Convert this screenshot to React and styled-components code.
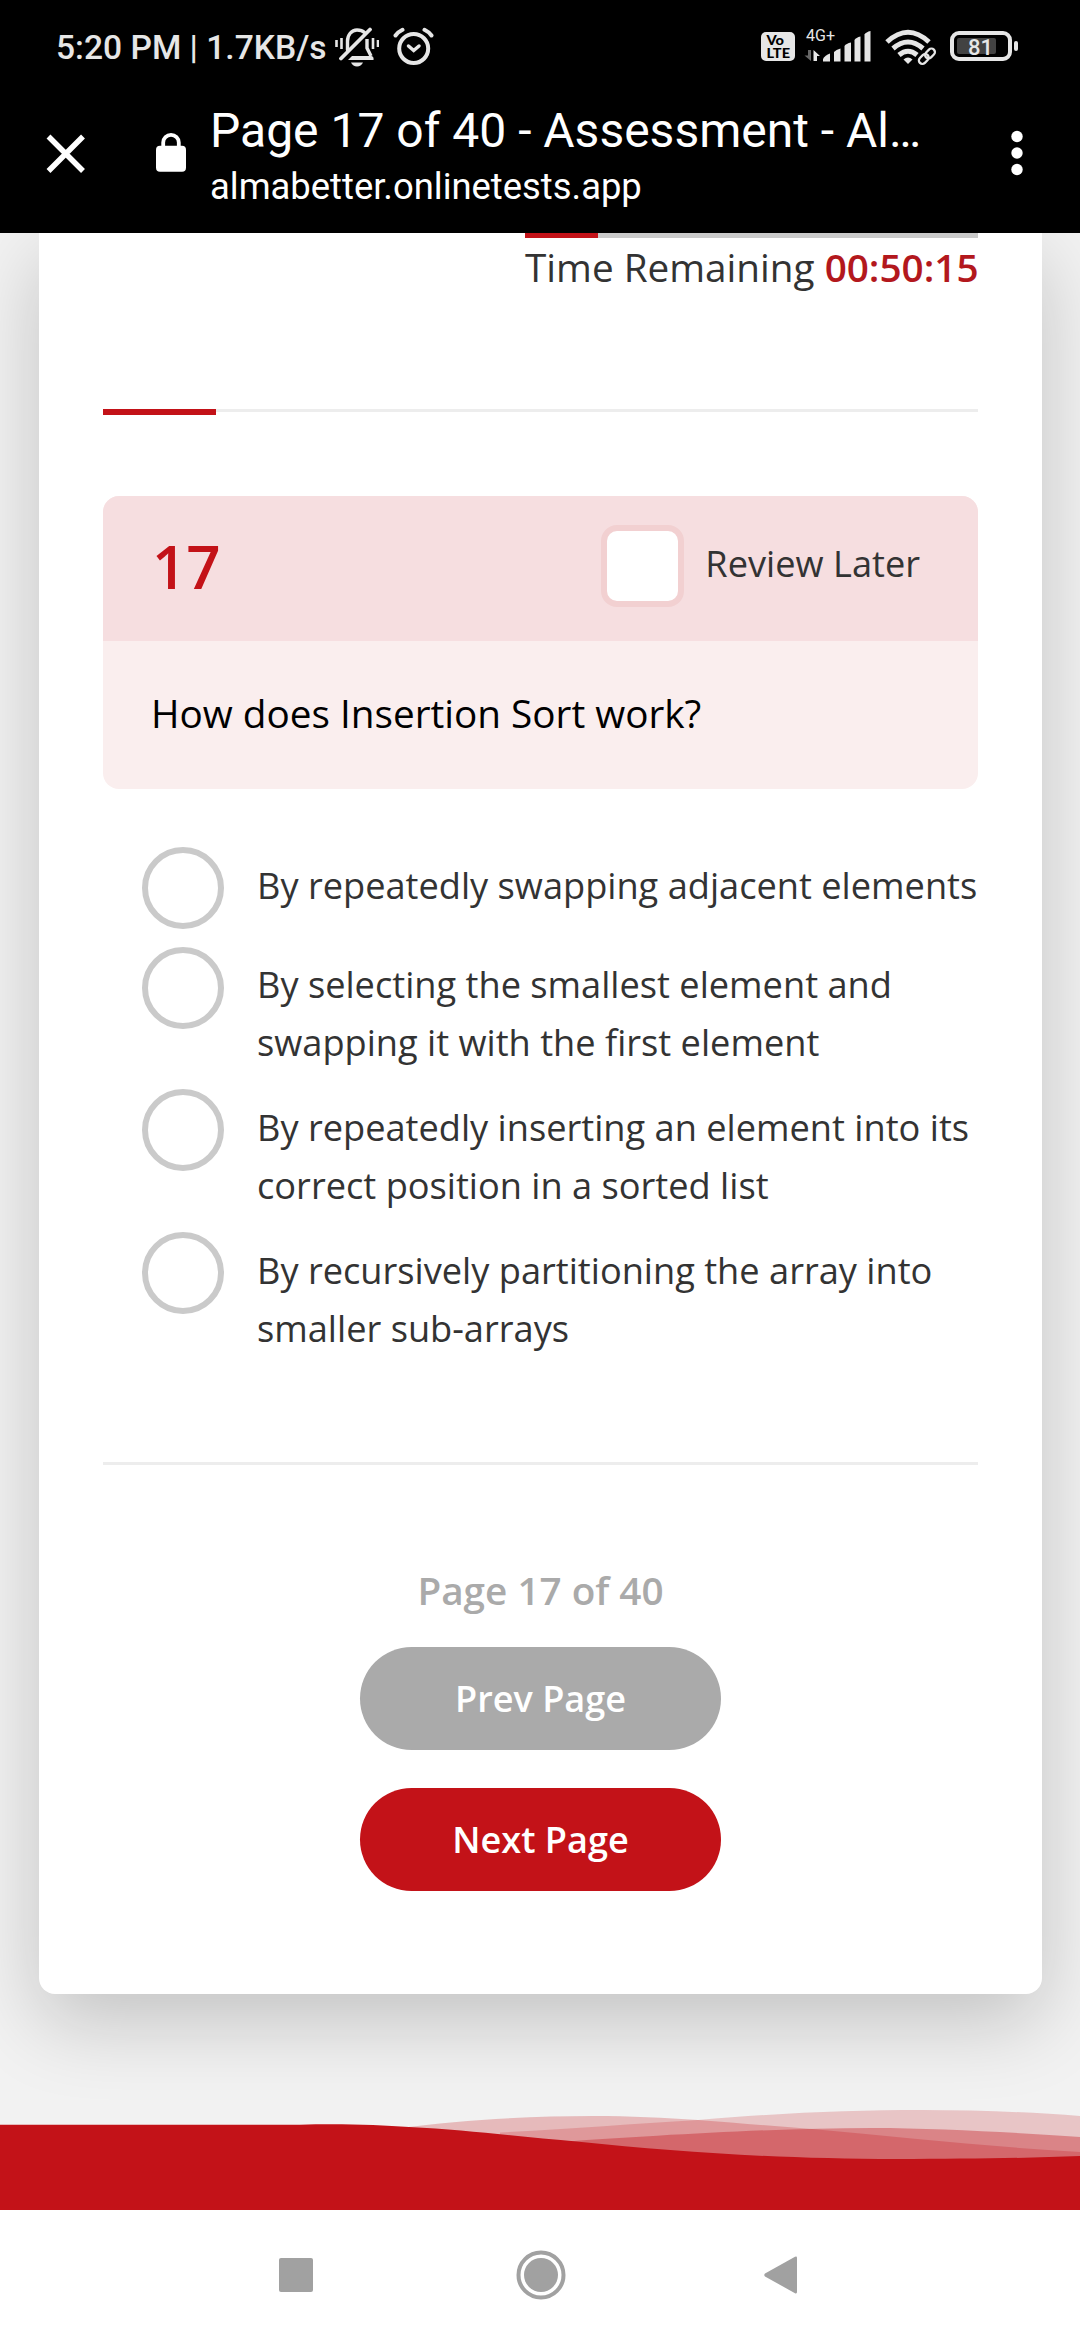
import React from 'react';
import styled, { createGlobalStyle } from 'styled-components';

const Global = createGlobalStyle`
  *, *::before, *::after { box-sizing: border-box; }
  body { margin: 0; background: #f2f2f2; }
  svg { display: block; flex: none; }
`;
const RED = '#c31218';

const Screen = styled.div`
  width: 1080px;
  height: 2340px;
  display: flex;
  flex-direction: column;
  overflow: hidden;
  background: #f2f2f2;
  font-family: 'Open Sans', sans-serif;
  color: #333;
`;
const Top = styled.header`
  height: 233px;
  flex: none;
  background: #000;
  color: #fff;
  font-family: Roboto, sans-serif;
  z-index: 1;
`;
const StatusBar = styled.div`
  height: 94px;
  padding: 0 59px 0 56px;
  display: flex;
  align-items: center;
  color: #e6e6e6;
`;
const Clock = styled.span`
  width: 279px;
  font-size: 33.6px;
  font-weight: 500;
  line-height: 40px;
  padding-top: 2px;
  white-space: nowrap;
`;
const StatusIcons = styled.div`
  display: flex;
  flex: 1;
  align-items: center;
  justify-content: flex-end;
`;
const AddressBar = styled.div`
  height: 139px;
  display: flex;
  padding: 0 51px 0 46px;
`;
const AddressIcon = styled.div`
  width: ${(p) => p.$w}px;
  flex: none;
  padding-top: ${(p) => p.$top}px;
`;
const Titles = styled.div`
  flex: 1;
  padding-top: 7px;
  white-space: nowrap;
`;
const Title = styled.div`
  font-size: 48px;
  line-height: 60px;
`;
const Host = styled.div`
  font-size: 36.4px;
  line-height: 44px;
  padding-top: 4px;
`;
const Page = styled.main`
  height: 1977px;
  flex: none;
  display: flex;
  flex-direction: column;
  justify-content: space-between;
`;
const Card = styled.section`
  width: 1003px;
  height: 1761px;
  margin-left: 39px;
  padding: 0 64px;
  display: flex;
  flex-direction: column;
  background: #fff;
  border-radius: 0 0 16px 16px;
  box-shadow: 0 27px 82px rgba(0, 0, 0, 0.2);
`;
const Timer = styled.div`
  width: 453px;
  align-self: flex-end;
  height: 176px;
`;
const TimeTrack = styled.div`
  height: 5px;
  background: #cacaca;
`;
const TimeFill = styled.div`
  width: 73px;
  height: 5px;
  background: ${RED};
`;
const TimeText = styled.div`
  font-size: 38.7px;
  line-height: 58px;
  white-space: nowrap;
  b { font-weight: 600; color: #b3181d; }
`;
const Progress = styled.div`
  height: 87px;
  border-top: 3px solid #ededed;
`;
const ProgressFill = styled.div`
  width: 113px;
  height: 6px;
  margin-top: -3px;
  background: ${RED};
`;
const Question = styled.article`
  height: 293px;
  overflow: hidden;
  border-radius: 16px;
  background: #faeeee;
`;
const QuestionHead = styled.div`
  height: 145px;
  padding: 0 58px 0 49px;
  display: flex;
  align-items: center;
  justify-content: space-between;
  background: #f6dee0;
`;
const QuestionNumber = styled.span`
  font-size: 60px;
  font-weight: 600;
  line-height: 60px;
  padding-bottom: 6px;
  color: ${RED};
`;
const Review = styled.label`
  display: flex;
  align-items: center;
  gap: 21px;
  padding-bottom: 5px;
`;
const ReviewText = styled.span`
  padding-bottom: 6px;
  font-size: 36.2px;
  line-height: 58px;
  white-space: nowrap;
`;
const Checkbox = styled.span`
  width: 83px;
  height: 82px;
  border: 6px solid #f2d0d1;
  border-radius: 16px;
  background: #fff;
`;
const QuestionText = styled.p`
  margin: 0;
  padding: 43px 48px;
  font-size: 38.7px;
  line-height: 58px;
  color: #000;
`;
const Options = styled.ul`
  height: 673px;
  margin: 0;
  padding: 58px 0 0 39px;
  list-style: none;
`;
const Option = styled.li`
  display: flex;
  height: ${(p) => p.$h}px;
`;
const Radio = styled.span`
  flex: none;
  width: 82px;
  height: 82px;
  border: 6px solid #cacaca;
  border-radius: 50%;
`;
const OptionText = styled.span`
  padding: 9px 0 0 33px;
  margin-top: ${(p) => p.$shift}px;
  font-size: 36.2px;
  line-height: 58px;
  white-space: pre;
`;
const Pager = styled.nav`
  border-top: 3px solid #ededed;
  padding-top: 96px;
  display: flex;
  flex-direction: column;
  align-items: center;
`;
const PageCount = styled.div`
  font-size: 38.7px;
  font-weight: 600;
  line-height: 58px;
  height: 86px;
  color: #aaa;
`;
const Button = styled.button`
  width: 361px;
  height: 103px;
  margin: 0 0 38px;
  padding: 0 0 2px;
  border: 0;
  border-radius: 52px;
  background: ${(p) => (p.$primary ? RED : '#aaa')};
  color: #fff;
  font: 600 36.1px/58px 'Open Sans', sans-serif;
`;
const NavBar = styled.footer`
  height: 130px;
  flex: none;
  background: #fff;
  display: flex;
  align-items: center;
  padding-left: 279px;
`;
const NavKey = styled.div`
  width: ${(p) => p.$w}px;
  flex: none;
`;

const options = [
  ['By repeatedly swapping adjacent elements', 100, 0],
  ['By selecting the smallest element and\nswapping it with the first element', 142, -1],
  ['By repeatedly inserting an element into its\ncorrect position in a sorted list', 143, 0],
  ['By recursively partitioning the array into\nsmaller sub-arrays', 143, 0],
];

const MutedBell = () => (
  <svg width="44" height="40" viewBox="335 29 44 40" fill="none" stroke="#e6e6e6" strokeWidth="3.4">
    <path d="M347.500 52V43c0-6 4-11 9.500-11c3.500 0 6 1 7.500 2.500" strokeLinecap="round" />
    <path d="M367 41V50L371 58" />
    <path d="M341 60.500L370 31.500" strokeLinecap="round" strokeWidth="3.800" />
    <path d="M348 62L352 58H371.500Q374 58.500 373.500 62Z" fill="#e6e6e6" stroke="none" />
    <path d="M351 64.500H363Q361 68.500 357 68.500T351 64.500Z" fill="#e6e6e6" stroke="none" />
    <path d="M336.500 42V49M341.500 40V51M373 40V51M378 42V49" strokeWidth="2.600" />
  </svg>
);
const Alarm = () => (
  <svg width="42" height="40" viewBox="393 28 42 40" fill="none" stroke="#e6e6e6" strokeWidth="4">
    <circle cx="413.700" cy="49.500" r="14.500" />
    <path d="M408.500 47L413.700 51.500L419 47" strokeWidth="3.500" strokeLinecap="round" />
    <path d="M395.500 36.500Q398 33 402.500 30.800M431.500 36.500Q429 33 424.500 30.800" strokeLinecap="round" />
  </svg>
);
const StatusRight = () => (
  <svg width="260" height="44" viewBox="760 26 260 44">
    <rect x="760" y="33" width="34" height="29" rx="5" fill="#e6e6e6" />
    <g fontFamily="Lato, sans-serif" fontWeight="900" fill="#000">
      <text x="765.500" y="46" fontSize="13.500" textLength="17.500" lengthAdjust="spacingAndGlyphs">Vo</text>
      <text x="765.500" y="58.800" fontSize="13.500" textLength="23.500" lengthAdjust="spacingAndGlyphs">LTE</text>
    </g>
    <text x="805" y="42" fontFamily="Roboto, sans-serif" fontSize="16" fill="#e6e6e6" textLength="29" lengthAdjust="spacingAndGlyphs">4G+</text>
    <path d="M807 51H810V62L803.500 56.500H807Z" fill="#666" />
    <path d="M812.500 51L819 57H816V62H812.500Z" fill="#e6e6e6" />
    <g fill="#e6e6e6">
      <path d="M822 62.500V60Q824 56 829 54.500V62.500Z" />
      <path d="M833 62.500V53Q835 50.500 839.500 49.500V62.500Z" />
      <path d="M843.500 62.500V47Q845 44.500 850 43.500V62.500Z" />
      <path d="M853.500 62.500V41Q855 38.500 859.500 37.500V62.500Z" />
      <path d="M863.500 62.500V35.500Q865 33 869.500 32V62.500Z" />
    </g>
    <g fill="none" stroke="#e6e6e6" strokeWidth="5">
      <path d="M886 43Q907 23.500 928 43" />
      <path d="M892 49.500Q907 36.500 922 49.500" />
      <path d="M898 56Q907 48.500 916 56" />
    </g>
    <path d="M902.500 60.500Q907 56.500 911.500 60.500L907 65Z" fill="#e6e6e6" />
    <rect x="-7" y="-3.500" width="14" height="7" rx="3.500" transform="translate(926 57) rotate(-45)" fill="none" stroke="#000" strokeWidth="6" />
    <g fill="none" stroke="#e6e6e6" strokeWidth="2.300">
      <rect x="-5.500" y="-3.500" width="11" height="7" rx="3.500" transform="translate(929 54.500) rotate(-45)" />
      <rect x="-5.500" y="-3.500" width="11" height="7" rx="3.500" transform="translate(922.800 60) rotate(-45)" />
    </g>
    <rect x="951" y="34" width="58" height="26" rx="7" fill="none" stroke="#e6e6e6" strokeWidth="4" />
    <rect x="956" y="39" width="39" height="16" rx="2" fill="#424242" />
    <text x="967" y="55.500" fontFamily="Roboto, sans-serif" fontWeight="500" fontSize="22" fill="#e6e6e6">81</text>
    <rect x="1013" y="42" width="4" height="10" rx="2" fill="#e6e6e6" />
  </svg>
);
const Waves = () => (
  <svg width="1080" height="110" viewBox="0 2100 1080 110" fill={RED}>
    <path fillOpacity=".2" d="M500 2210V2132.500C570 2129 630 2124 698 2120C780 2113 850 2110 922 2110C980 2110 1035 2112.500 1080 2116V2210Z" />
    <path fillOpacity=".25" d="M400 2210V2128C460 2120 530 2116 593 2116C630 2116 665 2118 698 2120C735 2123 775 2126 812 2129C900 2137 990 2147 1080 2152V2210Z" />
    <path fillOpacity=".36" d="M560 2210V2142C650 2136 770 2128 872 2128C940 2128 1020 2133 1080 2137V2210Z" />
    <path d="M0 2124.800H300C340 2123.500 380 2125 409 2127C470 2130 520 2137 579 2141.700C680 2152 780 2159 897 2159C970 2159 1030 2158 1080 2156V2210H0Z" />
  </svg>
);

export default function App() {
  return (
    <Screen>
      <Global />
      <Top>
        <StatusBar>
          <Clock>5:20 PM | 1.7KB/s</Clock>
          <MutedBell />
          <AddressIcon $w={14} $top={0} />
          <Alarm />
          <StatusIcons><StatusRight /></StatusIcons>
        </StatusBar>
        <AddressBar>
          <AddressIcon $w={110} $top={39.5}>
            <svg width="40" height="40" stroke="#fff" strokeWidth="5.500"><path d="M2.500 2.500L37 37M37 2.500L2.500 37" /></svg>
          </AddressIcon>
          <AddressIcon $w={54} $top={39}>
            <svg width="30" height="40"><rect y="12.700" width="30" height="26" rx="4" fill="#fff" /><path d="M7.200 16V9.600a7.800 7.700 0 0 1 15.600 0V16" fill="none" stroke="#fff" strokeWidth="3.800" /></svg>
          </AddressIcon>
          <Titles>
            <Title>Page 17 of 40 - Assessment - Al…</Title>
            <Host>almabetter.onlinetests.app</Host>
          </Titles>
          <AddressIcon $w={18} $top={35}>
            <svg width="24" height="50" fill="#fff"><circle cx="6" cy="7.500" r="5.700" /><circle cx="6" cy="24" r="5.700" /><circle cx="6" cy="40.500" r="5.700" /></svg>
          </AddressIcon>
        </AddressBar>
      </Top>
      <Page>
        <Card>
          <Timer>
            <TimeTrack><TimeFill /></TimeTrack>
            <TimeText>Time Remaining <b>00:50:15</b></TimeText>
          </Timer>
          <Progress><ProgressFill /></Progress>
          <Question>
            <QuestionHead>
              <QuestionNumber>17</QuestionNumber>
              <Review><Checkbox /><ReviewText>Review Later</ReviewText></Review>
            </QuestionHead>
            <QuestionText>How does Insertion Sort work?</QuestionText>
          </Question>
          <Options>
            {options.map(([text, h, shift]) => (
              <Option key={text} $h={h}><Radio /><OptionText $shift={shift}>{text}</OptionText></Option>
            ))}
          </Options>
          <Pager>
            <PageCount>Page 17 of 40</PageCount>
            <Button>Prev Page</Button>
            <Button $primary>Next Page</Button>
          </Pager>
        </Card>
        <Waves />
      </Page>
      <NavBar>
        <NavKey $w={237}>
          <svg width="34" height="34"><rect width="34" height="34" rx="2" fill="#a1a1a1" /></svg>
        </NavKey>
        <NavKey $w={248}>
          <svg width="50" height="50" fill="#a1a1a1"><circle cx="25" cy="25" r="22.500" fill="none" stroke="#a1a1a1" strokeWidth="4" /><circle cx="25" cy="25" r="17" /></svg>
        </NavKey>
        <NavKey $w={34}>
          <svg width="34" height="38" fill="#a1a1a1"><path d="M1 17.500L31 .8Q33 0 33 2V36Q33 38 31 37.200L1 20.500Q-.5 19 1 17.500Z" /></svg>
        </NavKey>
      </NavBar>
    </Screen>
  );
}
